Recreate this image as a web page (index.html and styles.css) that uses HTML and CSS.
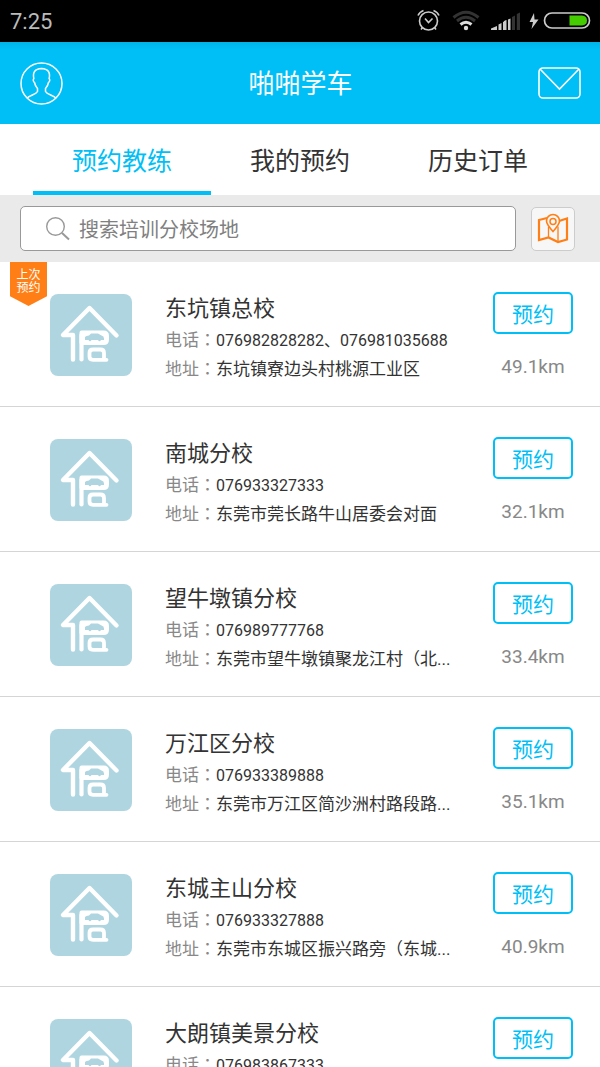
FILE: index.html
```html
<!DOCTYPE html>
<html lang="zh-CN">
<head>
<meta charset="utf-8">
<meta name="viewport" content="width=device-width, initial-scale=1">
<title>啪啪学车</title>
<link rel="stylesheet" href="styles.css">
</head>
<body>
<svg class="symbols" aria-hidden="true">
  <symbol id="school" viewBox="0 0 82 82">
    <g fill="none" stroke="#fff" stroke-linecap="round" stroke-linejoin="round">
      <path stroke-width="4.4" d="M66.5 41.5 39.5 14 13 41H23V65.5"/>
      <path fill="#fff" stroke-width="4" d="M31.5 38.500H53.500Q57 38.500 57 42V45.500Q57 49 53.500 49H31.500Z"/>
      <path stroke-width="4.2" d="M31.5 65.500V41"/>
      <path stroke-width="3.800" d="M56.500 65.800H43Q39.500 65.800 39.500 62.500V59Q39.500 55.500 43 55.500H50.500Q54 55.500 54 59V65"/>
    </g>
    <path fill="#afd6e0" d="M35 43Q36 41.500 39 41.500L41 39.500H48L51.500 41.500Q54 42 54 44.500V46H51Q49.500 48.500 48 46H41.500Q40 48.500 38.500 46H35Z"/>
  </symbol>
</svg>
<div class="app">
  <div class="status">
    <span class="clock">7:25</span>
    <svg class="status-icons" width="174" height="42" viewBox="0 0 174 42" aria-hidden="true">
      <g fill="none" stroke="#ccc" stroke-width="1.600">
        <circle cx="11.500" cy="21" r="9"/>
        <path d="M8 18.500 11.500 22.500 15.500 18.500M1 15.500Q2.500 12 6.500 10.500M22 15.500Q20.500 12 16.500 10.500M5.500 27.500 4 29.500M17.500 27.500 19 29.500"/>
      </g>
      <g fill="none" stroke="#333" stroke-width="3">
        <path d="M36.500 17.500Q49 7 61.500 17.500M40 21Q49 13.500 58 21"/>
        <path stroke="#ddd" d="M43.500 24.500Q49 20 54.500 24.500"/>
      </g>
      <circle cx="49" cy="28" r="2.200" fill="#ddd"/>
      <path fill="#ccc" d="M74 30V28.500L80 26V30ZM81.500 30V24.500L84.500 23V30ZM86 30V22L89 20.500V30Z"/>
      <path fill="#ccc" d="M87 30V21L89.500 20V30ZM91 30V19.500L93.500 18.500V30Z"/>
      <path fill="#333" d="M95 30V17L98 15.500V30ZM99.800 30V14L103 12.500V30Z"/>
      <path fill="#ccc" d="M117 13 112.500 22H116L114.500 29 121.500 19.500H117.500Z"/>
      <rect x="127.500" y="13" width="45" height="15" rx="7.500" fill="none" stroke="#ccc" stroke-width="1.700"/>
      <path fill="#4c0" d="M152.500 15.500H165Q170 16 170 20.500T165 25.500H152.500Z"/>
    </svg>
  </div>
  <header class="header">
    <button class="icon-button" aria-label="个人中心">
      <svg width="43" height="43" viewBox="0 0 43 43" fill="none" stroke="#fff" stroke-width="1.500">
        <circle cx="21.500" cy="21.500" r="20.500"/>
        <path d="M7 36C10 33 16 32.500 17.500 29.500V26.500C16 25 15 23 14.500 20.500C13 19.500 13 17.500 13.800 16.500C12.500 10 15 7 21.500 6.500C28 7 30.500 10 29.200 16.500C30 17.500 30 19.500 28.500 20.500C28 23 27 25 25.500 26.500V29.500C27 32.500 33 33 36 36"/>
      </svg>
    </button>
    <h1 class="title">啪啪学车</h1>
    <button class="icon-button" aria-label="消息">
      <svg width="43" height="32" viewBox="0 0 43 32" fill="none" stroke="#fff" stroke-width="1.600">
        <rect x="1" y="1" width="41" height="30" rx="4"/>
        <path d="M2 2 21.500 22 41 2"/>
      </svg>
    </button>
  </header>
  <nav class="tabs">
    <a class="tab active" href="#coach">预约教练</a>
    <a class="tab" href="#mine">我的预约</a>
    <a class="tab" href="#orders">历史订单</a>
  </nav>
  <div class="search">
    <label class="search-box">
      <svg width="26" height="26" viewBox="0 0 26 26" fill="none" stroke="#999" aria-hidden="true">
        <circle cx="10.500" cy="10.500" r="8.800" stroke-width="1.400"/>
        <path d="M17 17 24 23.500" stroke-width="2"/>
      </svg>
      <input class="search-input" type="text" placeholder="搜索培训分校场地" aria-label="搜索培训分校场地">
    </label>
    <button class="map" aria-label="地图">
      <svg width="32" height="32" viewBox="0 0 32 32" fill="none" stroke="#ff7f16">
        <path d="M10 5 2 7V27L11.500 24.500 21 29 30 26.500V5.500L22 8" stroke-width="2.200"/>
        <path d="M11.500 14V24.500M21 13.500V29" stroke-width="1.300"/>
        <path fill="#f7f7f7" stroke-width="1.600" d="M16 18.500C12 14 9.500 11 9.500 8A6.500 6.500 0 0 1 22.500 8C22.500 11 20 14 16 18.500Z"/>
        <circle cx="16" cy="8.500" r="3" stroke-width="1.500"/>
      </svg>
    </button>
  </div>
  <main class="list">
    <article class="row">
      <span class="ribbon">上次<br>预约</span>
      <svg class="logo" aria-hidden="true"><use href="#school"/></svg>
      <div class="info">
        <h2 class="name">东坑镇总校</h2>
        <p class="line phone"><span class="label" lang="zh-TW">电话：</span>076982828282、076981035688</p>
        <p class="line"><span class="label" lang="zh-TW">地址：</span>东坑镇寮边头村桃源工业区</p>
      </div>
      <div class="side"><button class="book">预约</button><span class="distance">49.1km</span></div>
    </article>
    <article class="row">
      <svg class="logo" aria-hidden="true"><use href="#school"/></svg>
      <div class="info">
        <h2 class="name">南城分校</h2>
        <p class="line phone"><span class="label" lang="zh-TW">电话：</span>076933327333</p>
        <p class="line"><span class="label" lang="zh-TW">地址：</span>东莞市莞长路牛山居委会对面</p>
      </div>
      <div class="side"><button class="book">预约</button><span class="distance">32.1km</span></div>
    </article>
    <article class="row">
      <svg class="logo" aria-hidden="true"><use href="#school"/></svg>
      <div class="info">
        <h2 class="name">望牛墩镇分校</h2>
        <p class="line phone"><span class="label" lang="zh-TW">电话：</span>076989777768</p>
        <p class="line"><span class="label" lang="zh-TW">地址：</span><span>东莞市望牛墩镇聚龙江村<span class="mark" lang="zh-TW">（</span>北...</span></p>
      </div>
      <div class="side"><button class="book">预约</button><span class="distance">33.4km</span></div>
    </article>
    <article class="row">
      <svg class="logo" aria-hidden="true"><use href="#school"/></svg>
      <div class="info">
        <h2 class="name">万江区分校</h2>
        <p class="line phone"><span class="label" lang="zh-TW">电话：</span>076933389888</p>
        <p class="line"><span class="label" lang="zh-TW">地址：</span>东莞市万江区简沙洲村路段路...</p>
      </div>
      <div class="side"><button class="book">预约</button><span class="distance">35.1km</span></div>
    </article>
    <article class="row">
      <svg class="logo" aria-hidden="true"><use href="#school"/></svg>
      <div class="info">
        <h2 class="name">东城主山分校</h2>
        <p class="line phone"><span class="label" lang="zh-TW">电话：</span>076933327888</p>
        <p class="line"><span class="label" lang="zh-TW">地址：</span><span>东莞市东城区振兴路旁<span class="mark" lang="zh-TW">（</span>东城...</span></p>
      </div>
      <div class="side"><button class="book">预约</button><span class="distance">40.9km</span></div>
    </article>
    <article class="row">
      <svg class="logo" aria-hidden="true"><use href="#school"/></svg>
      <div class="info">
        <h2 class="name">大朗镇美景分校</h2>
        <p class="line phone"><span class="label" lang="zh-TW">电话：</span>076983867333</p>
      </div>
      <div class="side"><button class="book">预约</button></div>
    </article>
  </main>
</div>
</body>
</html>
```

FILE: styles.css
```css
* { box-sizing: border-box; }
body, h1, h2, p { margin: 0; font-weight: 400; }
body {
  font-family: Roboto, "Noto Sans CJK SC", sans-serif;
  color: #333;
  background: #fff;
}
button, input { font: inherit; }
button { padding: 0; border: 0; background: none; cursor: pointer; }
svg { display: block; }
.symbols { position: absolute; width: 0; height: 0; }
.app { display: flex; flex-direction: column; height: 100vh; }
.status {
  display: flex;
  justify-content: space-between;
  align-items: center;
  flex: none;
  height: 42px;
  padding: 0 9px 0 10px;
  background: #000;
  color: #bbb;
}
.clock { font-size: 22px; line-height: 40px; padding-top: 2px; }
.header {
  display: flex;
  justify-content: space-between;
  align-items: center;
  flex: none;
  height: 82px;
  padding: 0 19px 0 20px;
  background: linear-gradient(#00b4e8, #00bff7 8px);
  color: #fff;
}
.title { padding-top: 1px; font-size: 26px; line-height: 40px; }
.tabs {
  display: grid;
  grid-template-columns: repeat(3, 1fr);
  flex: none;
  height: 71px;
  padding: 0 33px;
}
.tab {
  padding-top: 4px;
  color: #333;
  font-size: 25px;
  line-height: 67px;
  text-align: center;
  text-decoration: none;
}
.tab.active { color: #00bff7; box-shadow: inset 0 -4px #00bff7; }
.search {
  display: flex;
  align-items: center;
  gap: 15px;
  flex: none;
  height: 67px;
  padding: 0 25px 0 20px;
  background: #eaeaea;
}
.search-box {
  display: flex;
  align-items: center;
  gap: 8px;
  flex: 1;
  height: 45px;
  padding: 0 24px;
  border: 1px solid #999;
  border-radius: 5px;
  background: #fff;
}
.search-input { flex: 1; min-width: 0; padding: 2px 0 0; border: 0; outline: 0; font-size: 20px; background: none; }
.search-input::placeholder { color: #808080; opacity: 1; }
.map {
  display: grid;
  place-items: center;
  width: 44px;
  height: 44px;
  border: 1px solid #ccc;
  border-radius: 5px;
  background: #f7f7f7;
}
.list { flex: 1; min-height: 0; overflow: auto; scrollbar-width: none; }
.row {
  position: relative;
  display: flex;
  height: 145px;
  padding: 30px 27px 0 50px;
  border-bottom: 1px solid #d5d5d5;
}
.ribbon {
  position: absolute;
  top: 0;
  left: 10px;
  width: 37px;
  height: 44px;
  padding-top: 7px;
  background: #ff7f16;
  clip-path: polygon(0 0, 100% 0, 100% 78%, 50% 100%, 0 78%);
  color: #fff;
  font-size: 12px;
  line-height: 13px;
  text-align: center;
}
.logo {
  flex: none;
  width: 82px;
  height: 82px;
  margin-top: 2px;
  border-radius: 8px;
  background: #afd6e0;
}
.info { flex: 1; min-width: 0; padding-left: 33px; }
.name { padding: 1px 0; font-size: 22px; line-height: 32px; }
.line { display: flex; font-size: 17px; line-height: 29px; white-space: nowrap; }
.phone { font-size: 16px; }
.label { color: #888; font-size: 17px; }
.label, .mark { font-family: Roboto, "Noto Sans CJK TC", sans-serif; }
.side { display: flex; flex-direction: column; align-items: center; width: 80px; }
.book {
  width: 80px;
  height: 42px;
  border: 2px solid #00bff7;
  border-radius: 5px;
  color: #00bff7;
  font-size: 21px;
}
.distance { margin-top: 18px; color: #888; font-size: 19px; line-height: 30px; }
```
